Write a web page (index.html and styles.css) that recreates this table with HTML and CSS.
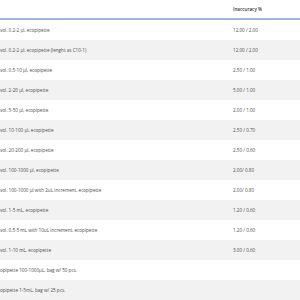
FILE: index.html
```html
<!DOCTYPE html>
<html>
<head>
    <meta charset="UTF-8">
    <title>Ecopipette specifications</title>
    <link rel="stylesheet" href="styles.css">
</head>
<body>
    <table class="spec-table">
        <thead>
            <tr>
                <th class="name"></th>
                <th class="value">Inaccuracy %</th>
            </tr>
        </thead>
        <tbody>
            <tr><td class="name">vol. 0.2-2 µl, ecopipette</td><td class="value">12.00 / 2.00</td></tr>
            <tr><td class="name">vol. 0.2-2 µl, ecopipette (lenght as C10-1)</td><td class="value">12.00 / 2.00</td></tr>
            <tr><td class="name">vol. 0.5-10 µl, ecopipette</td><td class="value">2.50 / 1.00</td></tr>
            <tr><td class="name">vol. 2-20 µl, ecopipette</td><td class="value">5.00 / 1.00</td></tr>
            <tr><td class="name">vol. 5-50 µl, ecopipette</td><td class="value">2.00 / 1.00</td></tr>
            <tr><td class="name">vol. 10-100 µl, ecopipette</td><td class="value">2.50 / 0.70</td></tr>
            <tr><td class="name">vol. 20-200 µl, ecopipette</td><td class="value">2.50 / 0.60</td></tr>
            <tr><td class="name">vol. 100-1000 µl, ecopipette</td><td class="value">2.00/ 0.80</td></tr>
            <tr><td class="name">vol. 100-1000 µl with 2uL increment, ecopipette</td><td class="value">2.00/ 0.80</td></tr>
            <tr><td class="name">vol. 1-5 mL, ecopipette</td><td class="value">1.20 / 0.60</td></tr>
            <tr><td class="name">vol. 0,5-5 mL with 10uL increment, ecopipette</td><td class="value">1.20 / 0.60</td></tr>
            <tr><td class="name">vol. 1-10 mL, ecopipette</td><td class="value">3.00 / 0.60</td></tr>
            <tr><td class="name">opipette 100-1000µL, bag w/ 50 pcs.</td><td class="value"></td></tr>
            <tr><td class="name">opipette 1-5mL, bag w/ 25 pcs.</td><td class="value"></td></tr>
        </tbody>
    </table>
</body>
</html>
```

FILE: styles.css
```css
body {
    margin: 0;
    background: #fff;
    font-family: 'Open Sans', sans-serif;
    color: #4d4d4d;
    overflow: hidden;
}
.spec-table {
    border-collapse: collapse;
    width: 300px;
    font-size: 4.6px;
}
.spec-table th {
    height: 18px;
    font-weight: 600;
    color: #333;
    text-align: left;
    border-bottom: 2px solid #9fb4de;
    padding: 0;
}
.spec-table td {
    height: 20px;
    padding: 0;
}
.spec-table tbody tr:nth-child(even) {
    background: #f2f2f2;
}
.name {
    width: 233px;
}
```
